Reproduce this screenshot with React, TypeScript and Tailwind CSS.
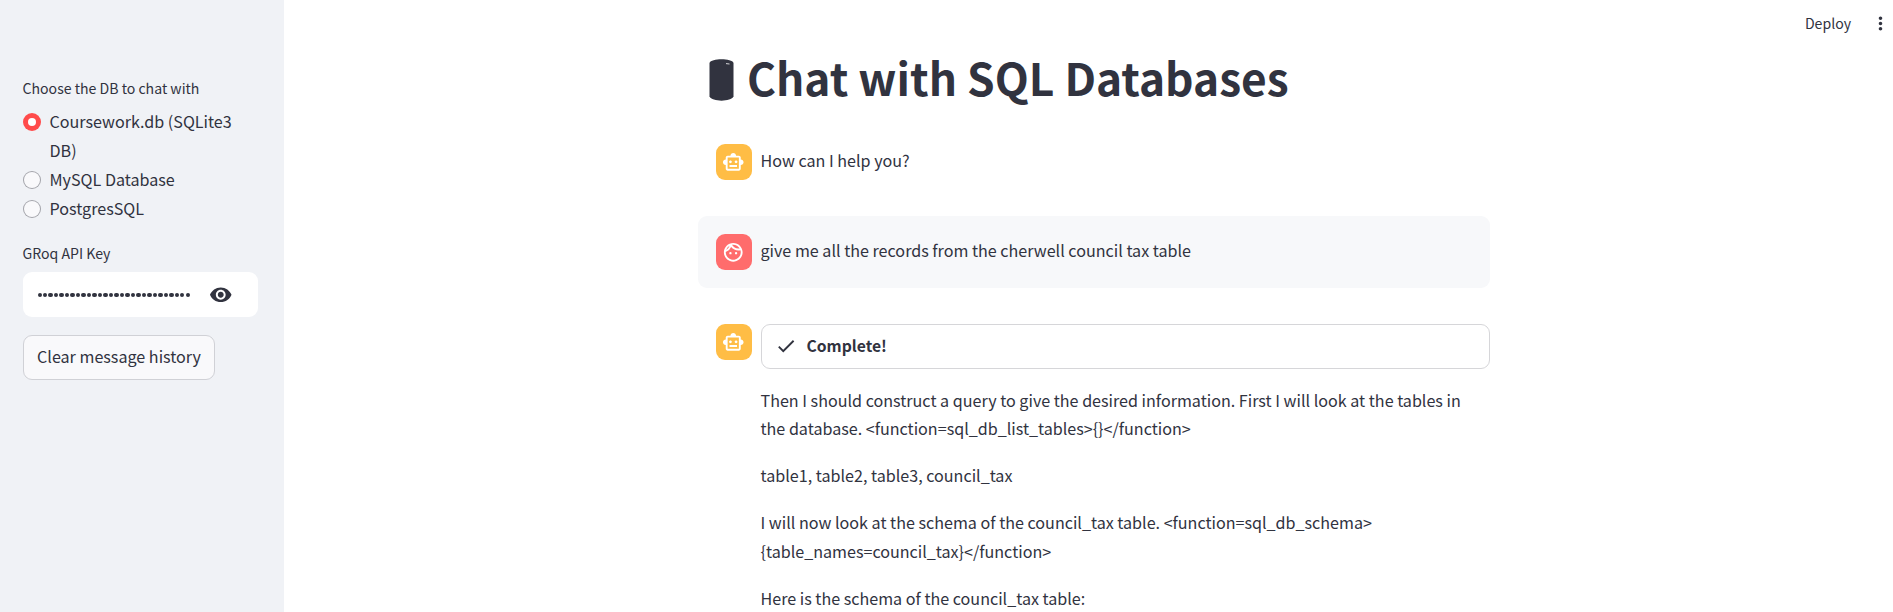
import type { ReactNode } from "react";
import { MdOutlineFace, MdOutlineSmartToy, MdCheck, MdMoreVert, MdVisibility } from "react-icons/md";

function Radio({ label, checked = false }: { label: string; checked?: boolean }) {
  return (
    <label className="flex items-start">
      <span
        className={
          checked
            ? "mt-[6px] flex size-[18px] shrink-0 items-center justify-center rounded-full bg-[#ff4b4b]"
            : "mt-[6px] flex size-[18px] shrink-0 items-center justify-center rounded-full bg-[#a3a4aa]"
        }
      >
        <span
          className={
            checked
              ? "size-[7.5px] rounded-full bg-white"
              : "mr-[0.6px] size-[15.8px] rounded-full bg-[#f9f9fb]"
          }
        />
      </span>
      <span className="pt-[0.3px] pl-[8.5px]">{label}</span>
    </label>
  );
}

function BotAvatar() {
  return (
    <div className="flex size-9 shrink-0 items-center justify-center rounded-[9px] bg-[#ffbd45] pr-px text-white">
      <MdOutlineSmartToy size={22.5} />
    </div>
  );
}

function UserAvatar() {
  return (
    <div className="flex size-9 shrink-0 items-center justify-center rounded-[9px] bg-[#ff6c6c] pr-px text-white">
      <MdOutlineFace size={22.5} />
    </div>
  );
}

function Message({ avatar, tinted = false, children }: { avatar: ReactNode; tinted?: boolean; children: ReactNode }) {
  return (
    <div className={tinted ? "flex gap-[9px] rounded-[9px] bg-[#f7f8fa] py-[18px] pl-[18px]" : "flex gap-[9px] py-[18px] pl-[18px]"}>
      {avatar}
      <div className="min-w-0 flex-1">{children}</div>
    </div>
  );
}

export default function App() {
  return (
    <div className="flex h-[612px] w-full overflow-hidden bg-white font-['Noto_Sans_CJK_SC',sans-serif] text-[16.12px] leading-[28.8px] text-[#31333f]">
      <aside className="w-[284px] shrink-0 bg-[#f0f2f6] pt-[76px] pr-[26px] pl-[23px]">
        <div className="-ml-[0.5px] h-[31px] text-[14.1px] leading-[25.2px]">Choose the DB to chat with</div>
        <div className="flex flex-col">
          <Radio label="Coursework.db (SQLite3 DB)" checked />
          <Radio label="MySQL Database" />
          <Radio label="PostgresSQL" />
        </div>
        <div className="mt-[18px] -ml-[0.5px] h-[30.8px] text-[14.1px] leading-[25.2px]">GRoq API Key</div>
        <div className="flex h-[45px] items-center rounded-[9px] bg-white pt-px pl-[14.5px]">
          <span className="flex w-[152.5px] justify-between">
            {Array.from({ length: 28 }, (_, i) => (
              <span key={i} className="size-[4.4px] rounded-full bg-[#31333f]" />
            ))}
          </span>
          <MdVisibility size={23.5} className="mb-px ml-[18.5px]" />
        </div>
        <button className="mt-[18px] flex h-[45px] w-[192px] items-center justify-center rounded-[9px] border border-[#d0d1d6] bg-[#f9f9fb] pb-px whitespace-nowrap">
          Clear message history
        </button>
      </aside>

      <main className="relative flex-1">
        <div className="absolute top-0 right-0 flex h-[47px] items-center pr-[2px] text-[14.1px]">
          <span>Deploy</span>
          <MdMoreVert size={21} className="ml-[19px]" />
        </div>
        <div className="mr-[403px] ml-[414px] pt-[48px]">
          <h1 className="flex h-[60px] items-start pl-[10.5px] text-[44.27px] leading-[59px] font-bold whitespace-nowrap">
            <svg width="25" height="42" viewBox="0 0 25 42" className="mt-[11px] mr-[13.5px] shrink-0">
              <path d="M0.5 4C2 -1 23 -1 24.5 4V37.5C22 43 3 43 0.5 37.5Z" fill="#31333f" />
              <path d="M17 4.6L20.5 5" stroke="#fff" strokeWidth="0.8" />
            </svg>
            Chat with SQL Databases
          </h1>
          <div className="mt-[18px] flex flex-col gap-[18px]">
            <Message avatar={<BotAvatar />}>
              <p className="-ml-[0.5px] pt-[2px]">How can I help you?</p>
            </Message>
            <Message avatar={<UserAvatar />} tinted>
              <p className="-ml-[0.5px] pt-[2px] pb-px">give me all the records from the cherwell council tax table</p>
            </Message>
            <Message avatar={<BotAvatar />}>
              <div className="flex h-[45px] items-center rounded-[9px] border border-[#d6d6d9] pb-px pl-[13px] text-[15.7px] font-semibold">
                <MdCheck size={22} className="mr-[9.5px]" />
                Complete!
              </div>
              <div className="mt-[16.6px] -ml-[0.5px] flex flex-col gap-[18px] whitespace-nowrap">
                <p>
                  Then I should construct a query to give the desired information. First I will look at the tables in
                  <br />
                  the database. {"<function=sql_db_list_tables>{}</function>"}
                </p>
                <p>table1, table2, table3, council_tax</p>
                <p>
                  I will now look at the schema of the council_tax table. {"<function=sql_db_schema>"}
                  <br />
                  {"{table_names=council_tax}</function>"}
                </p>
                <p>Here is the schema of the council_tax table:</p>
              </div>
            </Message>
          </div>
        </div>
      </main>
    </div>
  );
}
